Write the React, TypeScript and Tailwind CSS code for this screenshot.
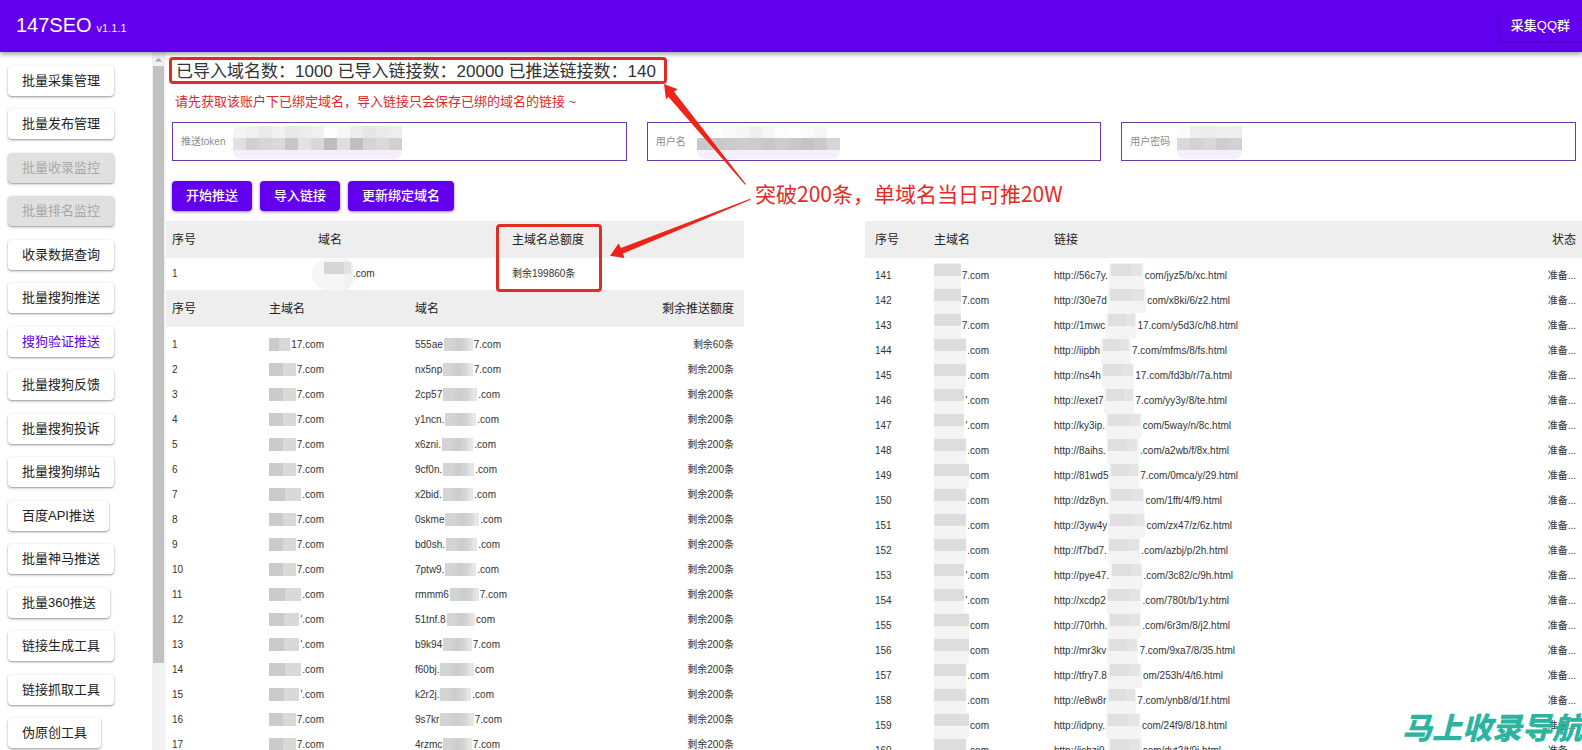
import React from "react";

type NavItem = { label: string; state?: "disabled" | "active" };

const NAV: NavItem[] = [
  { label: "批量采集管理" },
  { label: "批量发布管理" },
  { label: "批量收录监控", state: "disabled" },
  { label: "批量排名监控", state: "disabled" },
  { label: "收录数据查询" },
  { label: "批量搜狗推送" },
  { label: "搜狗验证推送", state: "active" },
  { label: "批量搜狗反馈" },
  { label: "批量搜狗投诉" },
  { label: "批量搜狗绑站" },
  { label: "百度API推送" },
  { label: "批量神马推送" },
  { label: "批量360推送" },
  { label: "链接生成工具" },
  { label: "链接抓取工具" },
  { label: "伪原创工具" },
];

type DomainRow = { root: string; head: string; tail: string; width: number; quota: string };

const DOMAINS: DomainRow[] = [
  { root: "17.com", head: "555ae", tail: "7.com", width: 86, quota: "剩余60条" },
  { root: "7.com", head: "nx5np", tail: "7.com", width: 86, quota: "剩余200条" },
  { root: "7.com", head: "2cp57", tail: ".com", width: 85, quota: "剩余200条" },
  { root: "7.com", head: "y1ncn.", tail: ".com", width: 84, quota: "剩余200条" },
  { root: "7.com", head: "x6zni.", tail: ".com", width: 81, quota: "剩余200条" },
  { root: "7.com", head: "9cf0n.", tail: ".com", width: 82, quota: "剩余200条" },
  { root: ".com", head: "x2bid.", tail: ".com", width: 81, quota: "剩余200条" },
  { root: "7.com", head: "0skme", tail: ".com", width: 87, quota: "剩余200条" },
  { root: "7.com", head: "bd0sh.", tail: ".com", width: 85, quota: "剩余200条" },
  { root: "7.com", head: "7ptw9.", tail: ".com", width: 84, quota: "剩余200条" },
  { root: ".com", head: "rmmm6", tail: "7.com", width: 92, quota: "剩余200条" },
  { root: "'.com", head: "51tnf.8", tail: "com", width: 80, quota: "剩余200条" },
  { root: "'.com", head: "b9k94", tail: "7.com", width: 85, quota: "剩余200条" },
  { root: ".com", head: "f60bj.", tail: "com", width: 79, quota: "剩余200条" },
  { root: "'.com", head: "k2r2j.", tail: ".com", width: 79, quota: "剩余200条" },
  { root: "7.com", head: "9s7kr", tail: "7.com", width: 87, quota: "剩余200条" },
  { root: "7.com", head: "4rzmc", tail: "7.com", width: 85, quota: "剩余200条" },
];

type LinkRow = { id: number; root: string; head: string; tail: string; width: number };

const LINKS: LinkRow[] = [
  { id: 141, root: "7.com", head: "http://56c7y.", tail: "com/jyz5/b/xc.html", width: 173 },
  { id: 142, root: "7.com", head: "http://30e7d", tail: "com/x8ki/6/z2.html", width: 176 },
  { id: 143, root: "7.com", head: "http://1mwc", tail: "17.com/y5d3/c/h8.html", width: 184 },
  { id: 144, root: ".com", head: "http://iipbh", tail: "7.com/mfms/8/fs.html", width: 173 },
  { id: 145, root: ".com", head: "http://ns4h", tail: "17.com/fd3b/r/7a.html", width: 178 },
  { id: 146, root: "'.com", head: "http://exet7", tail: "7.com/yy3y/8/te.html", width: 173 },
  { id: 147, root: "'.com", head: "http://ky3ip.", tail: "com/5way/n/8c.html", width: 177 },
  { id: 148, root: ".com", head: "http://8aihs.", tail: ".com/a2wb/f/8x.html", width: 175 },
  { id: 149, root: "com", head: "http://81wd5", tail: "7.com/0mca/y/29.html", width: 184 },
  { id: 150, root: ".com", head: "http://dz8yn.", tail: "com/1fft/4/f9.html", width: 168 },
  { id: 151, root: ".com", head: "http://3yw4y", tail: "com/zx47/z/6z.html", width: 178 },
  { id: 152, root: ".com", head: "http://f7bd7.", tail: ".com/azbj/p/2h.html", width: 174 },
  { id: 153, root: "'.com", head: "http://pye47.", tail: ".com/3c82/c/9h.html", width: 179 },
  { id: 154, root: "'.com", head: "http://xcdp2", tail: ".com/780t/b/1y.html", width: 175 },
  { id: 155, root: "com", head: "http://70rhh.", tail: ".com/6r3m/8/j2.html", width: 176 },
  { id: 156, root: "com", head: "http://mr3kv", tail: "7.com/9xa7/8/35.html", width: 181 },
  { id: 157, root: ".com", head: "http://tfry7.8", tail: "om/253h/4/t6.html", width: 169 },
  { id: 158, root: ".com", head: "http://e8w8r", tail: "7.com/ynb8/d/1f.html", width: 176 },
  { id: 159, root: "com", head: "http://idpny.", tail: "com/24f9/8/18.html", width: 173 },
  { id: 160, root: ".com", head: "http://jcbzj9.", tail: "com/dyt2/t/9j.html", width: 167 },
];

type Field = { id: string; label: string; type: string; maskLeft: number; top: string[]; bottom: string[] };

const FIELDS: Field[] = [
  {
    id: "token",
    label: "推送token",
    type: "text",
    maskLeft: 60,
    top: ["#f4f4f4", "#f0f0f0", "#ebe9ec", "#f2f0f3", "#e9e9e9", "#ececec", "#f0f0f0", "#fefefe", "#f7f7f7", "#ededed", "#e6e6e6", "#eaeaea", "#eeeeee"],
    bottom: ["#e0dfe1", "#d0d0d0", "#d6d6d6", "#dadada", "#c6c6c6", "#e2e2e2", "#d8d8d8", "#bdbdbd", "#dedede", "#bfbfbf", "#d4d4d4", "#dadada", "#d0d0d0"],
  },
  {
    id: "user",
    label: "用户名",
    type: "text",
    maskLeft: 49,
    top: ["#ffffff", "#ffffff", "#fafafa", "#f6f6f6", "#efefef", "#f6f6f6", "#fdfdfd", "#ffffff", "#fbfbfb", "#f6f6f6", "#ffffff"],
    bottom: ["#c9c9c9", "#cacaca", "#cbcbcb", "#cecece", "#cccccc", "#c8c8c8", "#cccccc", "#c9c9c9", "#c4c4c4", "#cacaca", "#d6d6d6"],
  },
  {
    id: "password",
    label: "用户密码",
    type: "password",
    maskLeft: 55,
    top: ["#fbfbfb", "#eeeeee", "#ededed", "#efefef", "#eeeeee"],
    bottom: ["#dadada", "#d2d2d2", "#d8d8d8", "#cecece", "#d2d2d2"],
  },
];

function MaskStrip({ shades }: { shades: string[] }) {
  return (
    <div className="flex">
      {shades.map((shade, i) => (
        <i key={i} className="block h-3 w-[13px]" style={{ backgroundColor: shade }} />
      ))}
    </div>
  );
}

function MaskedField({ field }: { field: Field }) {
  return (
    <div className="relative flex h-[39px] items-center border border-[#6a3aa5] px-2 text-[10px] leading-4">
      <label htmlFor={field.id} className="shrink-0 text-[#8c8c8c]">
        {field.label}
      </label>
      <input id={field.id} type={field.type} className="h-full min-w-0 flex-1 bg-transparent px-2 outline-none" />
      <div
        className="pointer-events-none absolute top-[3px] overflow-hidden rounded-tl-lg rounded-b-lg bg-[#f5effb] pb-[9px]"
        style={{ left: field.maskLeft }}
      >
        <MaskStrip shades={field.top} />
        <MaskStrip shades={field.bottom} />
      </div>
    </div>
  );
}

function RootDomain({ tail, tall }: { tail: string; tall?: boolean }) {
  return (
    <span className="flex w-[55px] items-center gap-px">
      {tall ? (
        <i className="block h-[25px] flex-1 bg-[linear-gradient(#f2f2f2_1px,#dddddd_1px,#dddddd_13px,#f4f4f4_13px)]" />
      ) : (
        <i className="block h-[13px] flex-1 bg-[linear-gradient(90deg,#cbcbcb_50%,#d9d9d9_50%)]" />
      )}
      {tail}
    </span>
  );
}

function NavButton({ item }: { item: NavItem }) {
  const tone =
    item.state === "disabled"
      ? "bg-[#e0e0e0] text-[#a8a8a8]"
      : item.state === "active"
        ? "bg-white text-[#6200ee]"
        : "bg-white text-[#222222]";
  return (
    <button
      type="button"
      disabled={item.state === "disabled"}
      className={`h-[30px] rounded px-[14px] text-[13px] leading-[30px] shadow-[0_1px_2px_rgba(0,0,0,0.35),0_1px_4px_rgba(0,0,0,0.1)] ${tone}`}
    >
      {item.label}
    </button>
  );
}

const HEAD_ROW = "h-[37px] bg-[#eeeeee] text-xs leading-4 text-[#222222]";
const TABLE = "w-full table-fixed border-collapse whitespace-nowrap text-left";
const BODY = "text-[10px] leading-4 text-[#333333] [&>tr>td]:h-[25px] [&>tr>td]:px-[6px] [&>tr:first-child>td]:h-[30px] [&>tr:first-child>td]:pt-[5px]";

export default function App() {
  return (
    <div
      lang="zh-CN"
      className="relative flex h-screen flex-col overflow-hidden bg-white font-['Liberation_Sans','Noto_Sans_CJK_SC',sans-serif]"
    >
      <header className="relative z-10 flex h-[52px] shrink-0 items-center justify-between bg-[#6200ee] pl-4 text-white shadow-[0_2px_5px_rgba(0,0,0,0.4)]">
        <h1 className="flex items-baseline gap-[5px] text-xl leading-6">
          147SEO <small className="text-[11px] text-[#f3eaff]">v1.1.1</small>
        </h1>
        <a
          href="#qq"
          className="rounded-l px-3 text-[13px] font-medium leading-[30px] shadow-[0_1px_3px_rgba(0,0,0,0.25)]"
        >
          采集QQ群
        </a>
      </header>

      <div className="flex min-h-0 flex-1">
        <aside className="flex w-[166px] shrink-0 overflow-hidden">
          <nav className="flex-1 pl-2 pt-[14px]">
            <ul>
              {NAV.map((item) => (
                <li key={item.label} className="h-[43px] even:h-[44px]">
                  <NavButton item={item} />
                </li>
              ))}
            </ul>
          </nav>
          <div className="flex w-[13px] flex-col items-center bg-[#f1f1f1]" aria-hidden="true">
            <svg viewBox="0 0 13 14" className="h-[14px] w-[13px] shrink-0">
              <path d="M3 9.5 6.5 6 10 9.5z" fill="#a3a3a3" />
            </svg>
            <div className="h-[85.5%] w-[11px] bg-[#c1c1c1]" />
          </div>
          <div className="w-px bg-[#f8f8f8]" />
        </aside>

        <main className="relative min-w-0 flex-1 overflow-hidden">
          <p className="ml-[3px] mt-[5px] h-[27px] w-fit whitespace-nowrap rounded border-3 border-[#e02d22] pl-1 pr-2 text-[17px] leading-6 text-[#333333]">
            已导入域名数：1000 已导入链接数：20000 已推送链接数：140
          </p>
          <p className="mt-2 pl-[9px] text-[13px] leading-5 text-[#e0282e]">
            请先获取该账户下已绑定域名，导入链接只会保存已绑的域名的链接 ~
          </p>

          <form className="px-[6px]">
            <div className="mt-[10px] grid grid-cols-3 gap-5">
              {FIELDS.map((field) => (
                <MaskedField key={field.id} field={field} />
              ))}
            </div>
            <div className="mt-5 flex gap-2">
              {["开始推送", "导入链接", "更新绑定域名"].map((label) => (
                <button
                  key={label}
                  type="button"
                  className="h-[30px] rounded bg-[#6200ee] px-[14px] text-[13px] font-medium leading-[30px] text-white shadow-[0_1px_3px_rgba(60,0,150,0.5)]"
                >
                  {label}
                </button>
              ))}
            </div>
          </form>

          <div className="mt-[10px] grid grid-cols-[578fr_121fr_717fr] items-start">
            <section>
              <table className={TABLE}>
                <colgroup>
                  <col className="w-[146px]" />
                  <col className="w-[194px]" />
                  <col />
                </colgroup>
                <thead>
                  <tr className={HEAD_ROW}>
                    <th className="px-[6px] font-normal">序号</th>
                    <th className="px-[6px] font-normal">域名</th>
                    <th className="px-[6px] font-normal">主域名总额度</th>
                  </tr>
                </thead>
                <tbody className="text-[10px] leading-4 text-[#333333]">
                  <tr className="h-8">
                    <td className="px-[6px]">1</td>
                    <td>
                      <span className="flex items-center">
                        <i className="flex size-8 items-start justify-end rounded-l-full bg-[#f6f6f6] pt-1">
                          <i className="block h-3 w-5 bg-[#d6d6d6]" />
                        </i>
                        <i className="block h-8 w-[9px] rounded-r-full bg-[#f2f2f2] pt-1">
                          <i className="block h-3 w-[7px] bg-[#e2e2e2]" />
                        </i>
                        .com
                      </span>
                    </td>
                    <td className="px-[6px]">剩余199860条</td>
                  </tr>
                </tbody>
              </table>
              <table className={TABLE}>
                <colgroup>
                  <col className="w-[97px]" />
                  <col className="w-[146px]" />
                  <col />
                  <col className="w-[140px]" />
                </colgroup>
                <thead>
                  <tr className={HEAD_ROW}>
                    <th className="px-[6px] font-normal">序号</th>
                    <th className="px-[6px] font-normal">主域名</th>
                    <th className="px-[6px] font-normal">域名</th>
                    <th className="px-[10px] text-right font-normal">剩余推送额度</th>
                  </tr>
                </thead>
                <tbody className={BODY}>
                  {DOMAINS.map((row, i) => (
                    <tr key={row.head}>
                      <td>{i + 1}</td>
                      <td>
                        <RootDomain tail={row.root} />
                      </td>
                      <td>
                        <span className="flex items-center gap-px" style={{ width: row.width }}>
                          {row.head}
                          <i className="block h-[13px] flex-1 bg-[linear-gradient(90deg,#d4d4d4_25%,#cccccc_50%,#d6d6d6_75%,#e6e6e6_90%)]" />
                          {row.tail}
                        </span>
                      </td>
                      <td>
                        <span className="block pr-1 text-right">{row.quota}</span>
                      </td>
                    </tr>
                  ))}
                </tbody>
              </table>
            </section>

            <section className="col-start-3">
              <table className={TABLE}>
                <colgroup>
                  <col className="w-[63px]" />
                  <col className="w-[120px]" />
                  <col />
                  <col className="w-[60px]" />
                </colgroup>
                <thead>
                  <tr className={HEAD_ROW}>
                    <th className="px-[10px] font-normal">序号</th>
                    <th className="px-[6px] font-normal">主域名</th>
                    <th className="px-[6px] font-normal">链接</th>
                    <th className="px-[6px] text-right font-normal">状态</th>
                  </tr>
                </thead>
                <tbody className={BODY}>
                  {LINKS.map((row) => (
                    <tr key={row.id}>
                      <td>
                        <span className="pl-1">{row.id}</span>
                      </td>
                      <td>
                        <RootDomain tail={row.root} tall />
                      </td>
                      <td>
                        <span className="flex items-center gap-px" style={{ width: row.width }}>
                          {row.head}
                          <i className="flex h-[25px] flex-1 justify-center bg-[#f4f4f4] pt-px">
                            <i className="block h-3 w-[90%] bg-[linear-gradient(90deg,#dfdfdf_65%,#e4e4e4_65%)]" />
                          </i>
                          {row.tail}
                        </span>
                      </td>
                      <td className="text-right">准备...</td>
                    </tr>
                  ))}
                </tbody>
              </table>
            </section>
          </div>

          <div className="pointer-events-none absolute left-[330px] top-[172px] h-[68px] w-[106px] rounded border-3 border-[#e02d22]" />
          <svg
            viewBox="0 0 160 180"
            className="pointer-events-none absolute left-[434px] top-[28px] h-[180px] w-[160px]"
            fill="#f02318"
            aria-hidden="true"
          >
            <path d="M64 4 77.7 9.3 74 11.8 146 104.2 145 104.8 68.3 16.8 66 19.5z" />
            <path d="M10 175.7 18.5 163.5 21 168 150.2 118.8 150.6 119.8 23 173.6 24.5 178z" />
          </svg>
          <p className="pointer-events-none absolute left-[589px] top-[127px] whitespace-nowrap font-['Noto_Sans_CJK_SC',sans-serif] text-[21px] leading-7 text-[#e62a26]">
            突破200条，单域名当日可推20W
          </p>
        </main>
      </div>

      <p className="pointer-events-none absolute bottom-2 right-0 z-20 whitespace-nowrap font-['Noto_Sans_CJK_SC',sans-serif] text-[30px] font-black italic leading-8 text-[#2bb5a0]">
        马上收录导航
      </p>
    </div>
  );
}
